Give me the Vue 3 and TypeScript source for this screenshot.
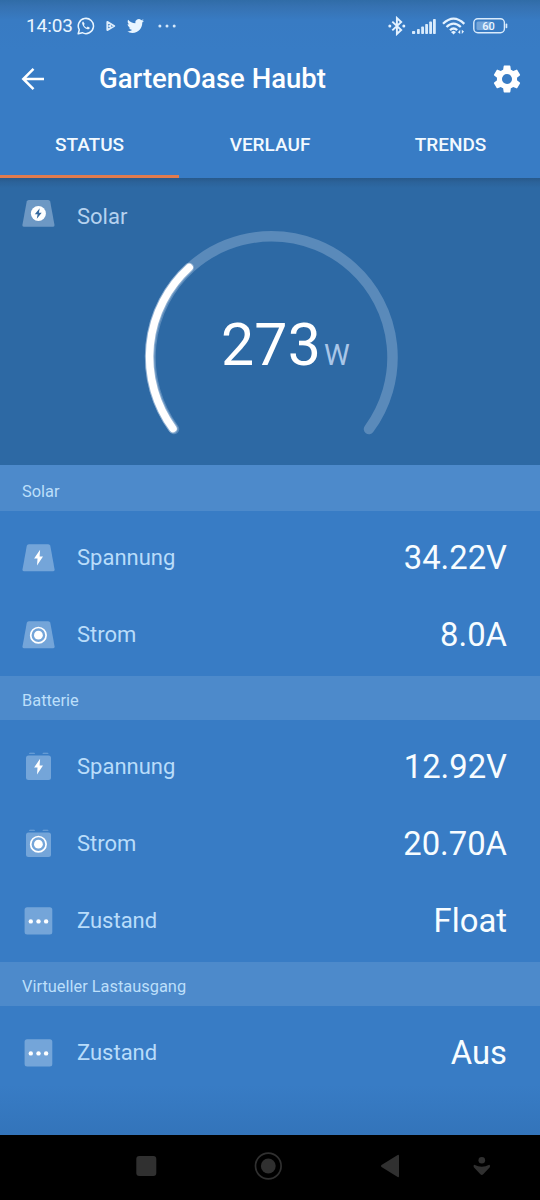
<script setup lang="ts">
type IconShape = 'panel' | 'battery' | 'box'
type IconMark = 'bolt' | 'ring' | 'dots'

interface Reading {
  label: string
  value: string
  shape: IconShape
  mark: IconMark
}

interface Section {
  title: string
  readings: Reading[]
}

const tabs: string[] = ['STATUS', 'VERLAUF', 'TRENDS']

const sections: Section[] = [
  {
    title: 'Solar',
    readings: [
      { label: 'Spannung', value: '34.22V', shape: 'panel', mark: 'bolt' },
      { label: 'Strom', value: '8.0A', shape: 'panel', mark: 'ring' },
    ],
  },
  {
    title: 'Batterie',
    readings: [
      { label: 'Spannung', value: '12.92V', shape: 'battery', mark: 'bolt' },
      { label: 'Strom', value: '20.70A', shape: 'battery', mark: 'ring' },
      { label: 'Zustand', value: 'Float', shape: 'box', mark: 'dots' },
    ],
  },
  {
    title: 'Virtueller Lastausgang',
    readings: [{ label: 'Zustand', value: 'Aus', shape: 'box', mark: 'dots' }],
  },
]
</script>

<template>
  <div class="screen">
    <header class="top">
      <div class="statusbar">
        <span class="clock">14:03</span>
        <svg class="whatsapp" width="18" height="18" viewBox="0 0 18 18">
          <path d="M1.2 16.8 2.3 12.8A7.6 7.6 0 1 1 5.3 15.7Z" fill="none" stroke="#e9f5ff" stroke-width="1.5" stroke-linejoin="round" />
          <path d="M6.2 4.6c-.8.3-1.2 1.1-1 2.1.5 2.6 2.6 4.9 5.3 5.6 1.1.2 2.2-.4 2.3-1.6l-2.1-1.1-1 1.100c-1.300-.5-2.200-1.400-2.800-2.700l.8-.9Z" fill="#e9f5ff" />
        </svg>
        <svg class="play" width="10" height="12" viewBox="0 0 10 12">
          <path d="M1.3 1.9 8.3 6 1.3 10.1Z" fill="none" stroke="#dcecfb" stroke-width="1.8" stroke-linejoin="round" />
          <path d="M1.5 6 5 4.300V8Z" fill="#dcecfb" />
        </svg>
        <svg class="bird" width="17" height="16" viewBox="0 2 24 20">
          <path d="M23.950 4.570a10 10 0 0 1-2.820.770 4.960 4.960 0 0 0 2.160-2.720c-.950.550-2.010.950-3.130 1.180a4.920 4.920 0 0 0-8.380 4.480C7.690 8.100 4.070 6.130 1.640 3.160a4.820 4.820 0 0 0-.670 2.480c0 1.710.870 3.210 2.190 4.100a4.900 4.900 0 0 1-2.230-.620v.060a4.920 4.920 0 0 0 3.950 4.830 5 5 0 0 1-2.210.080 4.940 4.940 0 0 0 4.600 3.420A9.870 9.870 0 0 1 0 19.540a13.990 13.990 0 0 0 7.550 2.210c9.050 0 14-7.500 14-13.990 0-.210 0-.420-.020-.630a9.940 9.940 0 0 0 2.420-2.560Z" fill="#e9f5ff" />
        </svg>
        <svg class="more" width="18" height="4" viewBox="0 0 18 4">
          <g fill="#d5e8fa"><circle cx="1.9" cy="2" r="1.5" /><circle cx="9" cy="2" r="1.5" /><circle cx="16.200" cy="2" r="1.5" /></g>
        </svg>

        <div class="system">
          <svg width="18" height="20" viewBox="0 0 18 20">
            <path d="M4.3 5.6 13.2 14 8.900 18V2L13.200 6 4.300 14.400" fill="none" stroke="#e4f2ff" stroke-width="1.9" />
            <circle cx="1.800" cy="10" r="1.500" fill="#e4f2ff" /><circle cx="15.800" cy="10" r="1.500" fill="#e4f2ff" />
          </svg>
          <svg class="signal" width="25" height="17" viewBox="0 0 25 17">
            <g fill="#d9ebfc">
              <rect x="0" y="13" width="3.200" height="3" rx=".8" /><rect x="5" y="11" width="2.800" height="5" rx=".8" />
              <rect x="9.200" y="8.500" width="2.800" height="7.500" rx=".8" /><rect x="13.200" y="6" width="2.800" height="10" rx=".8" />
              <rect x="17.200" y="3.500" width="2.800" height="12.500" rx=".8" /><rect x="21" y="1" width="2.800" height="15" rx=".8" />
            </g>
          </svg>
          <svg class="wifi" width="24" height="18" viewBox="0 0 24 18">
            <g fill="none" stroke="#e4f2ff" stroke-width="2.300">
              <path d="M1 6.800Q11.500-3.500 22.300 6.800" /><path d="M4.500 10Q11.500 3.300 18.800 10" /><path d="M8 13.200Q11.500 9.700 15.200 13.200" />
            </g>
            <path d="m8.900 15 2.700-1.300 2.400 1.300-2.400 2.400Z" fill="#e4f2ff" />
            <path d="M18.200 12.800v4.200l-2.200-1.800ZM19.800 17v-4.200l2.200 1.800Z" fill="#e4f2ff" />
          </svg>
          <svg class="cell" width="35" height="16" viewBox="0 0 35 16">
            <rect x=".8" y=".8" width="30.600" height="14" rx="4" fill="none" stroke="#d9ebfc" stroke-width="1.400" />
            <rect x="3.500" y="3.500" width="15" height="8.600" rx="1.500" fill="#74a5d9" />
            <rect x="32.600" y="5.600" width="1.700" height="4.600" rx=".8" fill="#d9ebfc" />
            <text x="15.600" y="12" text-anchor="middle" class="cell-text">60</text>
          </svg>
        </div>
      </div>

      <div class="titlebar">
        <svg class="back" width="24" height="24" viewBox="0 0 24 24">
          <path d="M23 12H2.800M12.500 1.900 2.300 12l10.200 10.100" fill="none" stroke="#fff" stroke-width="2.500" />
        </svg>
        <h1>GartenOase Haubt</h1>
        <svg class="gear" width="28" height="28" viewBox="2 2 20 20">
          <path d="M19.140 12.940c.040-.3.060-.610.060-.940 0-.320-.020-.640-.070-.940l2.030-1.580a.49.49 0 0 0 .120-.610l-1.920-3.320a.488.488 0 0 0-.590-.220l-2.390.960c-.5-.380-1.030-.7-1.620-.940L14.400 2.810a.484.484 0 0 0-.480-.410h-3.840a.47.47 0 0 0-.470.410l-.360 2.540c-.590.240-1.130.570-1.620.940l-2.390-.960a.48.48 0 0 0-.590.220L2.740 8.870a.47.47 0 0 0 .120.610l2.030 1.580c-.050.3-.090.630-.090.940s.020.640.070.940l-2.030 1.580a.49.49 0 0 0-.120.610l1.920 3.320c.120.220.370.290.590.220l2.390-.960c.5.380 1.030.7 1.620.940l.360 2.540c.050.240.240.410.480.410h3.840c.240 0 .440-.170.470-.410l.360-2.540c.590-.240 1.130-.560 1.620-.940l2.390.960c.220.080.470 0 .590-.220l1.920-3.320a.47.47 0 0 0-.120-.610ZM12 15.600a3.600 3.600 0 1 1 0-7.200 3.600 3.600 0 0 1 0 7.200Z" fill="#fff" />
        </svg>
      </div>

      <nav class="tabs">
        <span v-for="(tab, i) in tabs" :key="tab" class="tab" :class="{ active: i === 0 }">{{ tab }}</span>
      </nav>
    </header>

    <section class="gauge">
      <svg class="panel-icon" width="34" height="28" viewBox="0.500 -0.500 34 28">
        <path d="M7.300.5H26.600Q28.300.5 28.700 2L33 25.600Q33.200 27.200 31.700 27.200H2.200Q.700 27.200.900 25.600L5.200 2Q5.600.5 7.300.5Z" fill="#6d98c4" />
        <circle cx="16.900" cy="14" r="7.500" fill="#fff" />
        <path d="m18.200 8.800-4.900 6h2.800l-.8 4.500 4.900-6.100H17.400Z" fill="#35699f" />
      </svg>
      <span class="gauge-label">Solar</span>
      <svg class="dial" width="270" height="220" viewBox="136 224 270 220">
        <path d="M174 429A121 121 0 1 1 369 429" class="track" />
        <path d="M173 428.600A121 121 0 0 1 189.200 267.500" class="glow" />
        <path d="M173 428.600A121 121 0 0 1 189.200 267.500" class="power" />
      </svg>
      <div class="watts"><span class="number">273</span><span class="unit">W</span></div>
    </section>

    <main>
      <section v-for="section in sections" :key="section.title" class="group">
        <h2>{{ section.title }}</h2>
        <div class="rows">
          <div v-for="reading in section.readings" :key="reading.label" class="row">
            <svg class="icon" width="34" height="34" viewBox="0.400 0.600 34 34">
              <path v-if="reading.shape === 'panel'" d="M7.300 3.800H26.600Q28.300 3.800 28.700 5.300L33 29.200Q33.200 30.800 31.700 30.800H2.200Q.700 30.800.900 29.200L5.200 5.300Q5.600 3.800 7.300 3.800Z" class="base" />
              <g v-else-if="reading.shape === 'battery'" class="base">
                <rect x="4.400" y="6" width="25" height="24.700" rx="2.500" />
                <path d="M7.400 4.300q0-1 1-1h4q1 0 1 1ZM20.900 4.300q0-1 1-1h4q1 0 1 1Z" />
              </g>
              <rect v-else x="3" y="3.800" width="27.700" height="27.400" rx="2.500" class="base" />
              <path v-if="reading.mark === 'bolt'" d="m18.500 9.400-6 8.700h3.400l-.5 7 6-9H18Z" class="mark" />
              <g v-else-if="reading.mark === 'ring'">
                <circle cx="16.800" cy="17.800" r="7.700" fill="none" stroke="#fff" stroke-width="1.700" />
                <circle cx="16.800" cy="17.800" r="4.400" class="mark" />
              </g>
              <g v-else class="mark">
                <circle cx="9.200" cy="18" r="2.200" /><circle cx="16.900" cy="18" r="2.200" /><circle cx="24.500" cy="18" r="2.200" />
              </g>
            </svg>
            <span class="label">{{ reading.label }}</span>
            <span class="value">{{ reading.value }}</span>
          </div>
        </div>
      </section>
    </main>

    <footer class="navbar">
      <svg width="540" height="65" viewBox="0 1135 540 65" fill="#303030">
        <rect x="136.300" y="1156" width="20" height="20" rx="3" />
        <circle cx="268.300" cy="1166" r="12.800" fill="none" stroke="#303030" stroke-width="1.700" />
        <circle cx="268.300" cy="1166" r="7.400" />
        <path d="M381.500 1165.100 397.700 1155Q399 1154.300 399 1156V1176Q399 1177.700 397.700 1177L381.500 1166.900Q380.300 1166 381.500 1165.100Z" />
        <circle cx="481.800" cy="1160.200" r="3.300" />
        <path d="M474.300 1164.800Q481.800 1168.600 489.300 1164.800 490.700 1165.500 489.800 1167.200L483.200 1174.300Q481.800 1175.700 480.400 1174.300L473.800 1167.200Q472.900 1165.500 474.300 1164.800Z" />
      </svg>
    </footer>
  </div>
</template>

<style>
body {
  margin: 0;
  background: #000;
}
</style>

<style scoped>
.screen {
  display: flex;
  flex-direction: column;
  width: 540px;
  height: 1200px;
  overflow: hidden;
  color: #fff;
  background: #387cc5;
  font-family: Roboto, sans-serif;
}
.top {
  display: flex;
  flex-direction: column;
  height: 178px;
  background: linear-gradient(#306ca7 0, #3672b2 7px, #387bc3 20px, #387cc5 50px);
}
.statusbar {
  display: flex;
  align-items: center;
  height: 52px;
  padding: 0 32px 0 26px;
}
.clock {
  width: 50px;
  color: #e9f5ff;
  font-size: 19px;
  line-height: 54px;
  letter-spacing: -0.1px;
}
.whatsapp {
  margin-left: 1px;
}
.play {
  margin-left: 11px;
}
.bird {
  margin-left: 11px;
}
.more {
  margin-left: 14px;
}
.system {
  display: flex;
  align-items: center;
  margin-left: auto;
}
.signal {
  margin-left: 6px;
}
.wifi {
  margin-left: 5px;
  margin-right: 1px;
}
.cell {
  margin-left: 6px;
}
.cell-text {
  fill: #eaf5ff;
  font: 500 11px Roboto, sans-serif;
}
.titlebar {
  display: flex;
  align-items: center;
  height: 54px;
  padding: 0 19px 0 21px;
}
h1 {
  flex: 1;
  margin: 0 0 0 54px;
  font-size: 27.500px;
  font-weight: 500;
  line-height: 56px;
}
.tabs {
  display: grid;
  grid-template-columns: 179px 182px 179px;
  flex: 1;
}
.tab {
  box-sizing: border-box;
  border-bottom: 3px solid transparent;
  color: #f2f9ff;
  font-size: 19px;
  font-weight: 500;
  line-height: 78px;
  height: 72px;
  text-align: center;
}
.active {
  border-color: #e17b4e;
}
.gauge {
  position: relative;
  box-sizing: border-box;
  display: flex;
  align-items: flex-start;
  height: 287px;
  padding: 21px 22px 0;
  background: linear-gradient(#28598b 0, #2b6299 4px, #2d69a4 10px, #2d69a4 100%);
}
.gauge-label {
  margin-left: 21px;
  color: #b5d2ef;
  font-size: 22px;
  line-height: 36px;
}
.dial {
  position: absolute;
  left: 136px;
  top: 46px;
}
.track {
  fill: none;
  stroke: #5a8aba;
  stroke-width: 10.500;
  stroke-linecap: round;
}
.glow {
  fill: none;
  stroke: #8eb0d3;
  stroke-width: 9.500;
  stroke-linecap: round;
}
.power {
  fill: none;
  stroke: #fff;
  stroke-width: 7.500;
  stroke-linecap: round;
}
.watts {
  position: absolute;
  left: 221px;
  top: 132px;
  display: flex;
  align-items: baseline;
  line-height: 70px;
}
.number {
  font-size: 59px;
  letter-spacing: 0.2px;
}
.unit {
  margin-left: 3px;
  color: #a9c6e8;
  font-size: 29px;
}
main {
  flex: 1;
  background: linear-gradient(#387cc5 620px, #3374ba 670px);
}
h2 {
  margin: 0;
  height: 44px;
  padding-left: 22px;
  background: #4d8acb;
  color: #bcdffa;
  font-size: 16.400px;
  font-weight: 400;
  line-height: 49px;
}
.group:first-child h2 {
  height: 46px;
  line-height: 53px;
}
.rows {
  padding: 8px 0 3px;
}
.row {
  display: flex;
  align-items: center;
  height: 77px;
  padding: 0 33px 0 22px;
}
.label {
  flex: 1;
  margin-left: 21px;
  color: #b9dcfa;
  font-size: 22px;
}
.value {
  font-size: 32.800px;
  color: #f7fcff;
}
.base {
  fill: #74a5d9;
}
.mark {
  fill: #fff;
}
.navbar {
  height: 65px;
  background: #000;
}
</style>
